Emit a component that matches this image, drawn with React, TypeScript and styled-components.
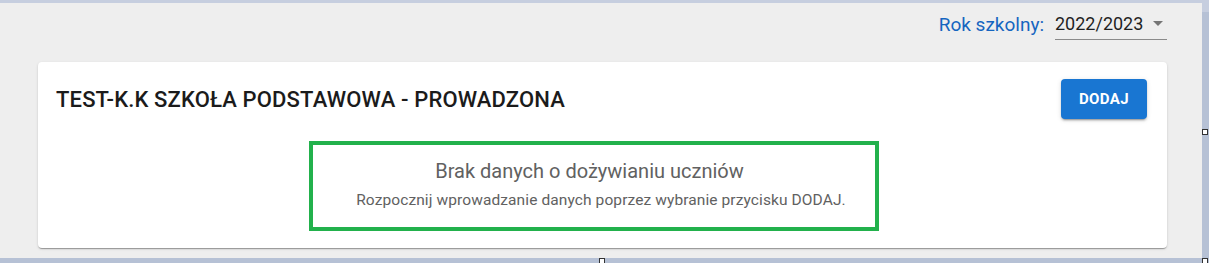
import styled, { createGlobalStyle } from "styled-components";

const GlobalStyle = createGlobalStyle`
  html, body {
    margin: 0;
    padding: 0;
    background: #c3cbdd;
    font-family: Roboto, "Noto Sans", Arial, sans-serif;
  }
`;

const Frame = styled.div`
  position: relative;
  width: 1209px;
  height: 263px;
  padding: 3px 7px 5px 0;
  box-sizing: border-box;
  background: linear-gradient(to bottom, #c6cedf 0, #c6cedf 12px, #b6c1d5 12px);
`;

const Panel = styled.div`
  height: 255px;
  background: #eeeeee;
  padding: 9px 35px 0 38px;
  box-sizing: border-box;
`;

const TopBar = styled.div`
  display: flex;
  justify-content: flex-end;
  align-items: center;
  height: 28px;
  gap: 11px;
`;

const YearLabel = styled.span`
  color: #1565c0;
  font-size: 19px;
  line-height: 22px;
  padding-bottom: 3px;
`;

const Select = styled.div`
  display: flex;
  align-items: center;
  justify-content: space-between;
  width: 112px;
  height: 28px;
  box-sizing: border-box;
  border-bottom: 1px solid #8a8a8a;
  font-size: 18px;
  color: #1f1f1f;
  padding-bottom: 4px;
`;

const Arrow = styled.span`
  width: 0;
  height: 0;
  margin-right: 4px;
  border-left: 5px solid transparent;
  border-right: 5px solid transparent;
  border-top: 5px solid #757575;
`;

const Card = styled.div`
  margin-top: 22px;
  background: #ffffff;
  border-radius: 4px;
  box-shadow: 0 2px 1px -1px rgba(0, 0, 0, 0.2), 0 1px 1px 0 rgba(0, 0, 0, 0.14),
    0 1px 3px 0 rgba(0, 0, 0, 0.12);
  padding: 17px 20px 17px 18px;
`;

const CardHeader = styled.div`
  display: flex;
  align-items: center;
  justify-content: space-between;
  height: 40px;
`;

const Title = styled.h2`
  margin: 0;
  font-size: 22px;
  font-weight: 500;
  letter-spacing: 0.15px;
  color: #1b1b1b;
`;

const AddButton = styled.button`
  width: 86px;
  height: 40px;
  border: none;
  border-radius: 4px;
  background: #1976d2;
  color: #ffffff;
  font-family: inherit;
  font-size: 15px;
  font-weight: 700;
  letter-spacing: 0.4px;
  box-shadow: 0 3px 1px -2px rgba(0, 0, 0, 0.2), 0 2px 2px 0 rgba(0, 0, 0, 0.14),
    0 1px 5px 0 rgba(0, 0, 0, 0.12);
`;

const EmptyRow = styled.div`
  display: flex;
  justify-content: center;
  padding-right: 16px;
  margin-top: 22px;
`;

const EmptyBox = styled.div`
  width: 570px;
  height: 90px;
  box-sizing: border-box;
  border: 4px solid #22b14c;
  display: flex;
  flex-direction: column;
  align-items: center;
  padding: 14px 0 0 15px;
`;

const EmptyTitle = styled.div`
  font-size: 20px;
  line-height: 24px;
  color: #616161;
  margin-right: 23px;
`;

const EmptyText = styled.div`
  margin-top: 8px;
  font-size: 15.5px;
  letter-spacing: 0.1px;
  line-height: 19px;
  color: #616161;
`;

const Handle = styled.span<{ left: number; top: number }>`
  position: absolute;
  left: ${(p) => p.left}px;
  top: ${(p) => p.top}px;
  width: 4px;
  height: 4px;
  background: #ffffff;
  border: 1px solid #333;
`;

export default function App() {
  return (
    <>
      <GlobalStyle />
      <Frame>
        <Panel>
          <TopBar>
            <YearLabel>Rok szkolny:</YearLabel>
            <Select>
              <span>2022/2023</span>
              <Arrow />
            </Select>
          </TopBar>
          <Card>
            <CardHeader>
              <Title>TEST-K.K SZKOŁA PODSTAWOWA - PROWADZONA</Title>
              <AddButton>DODAJ</AddButton>
            </CardHeader>
            <EmptyRow>
              <EmptyBox>
                <EmptyTitle>Brak danych o dożywianiu uczniów</EmptyTitle>
                <EmptyText>
                  Rozpocznij wprowadzanie danych poprzez wybranie przycisku DODAJ.
                </EmptyText>
              </EmptyBox>
            </EmptyRow>
          </Card>
        </Panel>
        <Handle left={1202} top={129} />
        <Handle left={599} top={258} />
        <Handle left={1202} top={258} />
      </Frame>
    </>
  );
}
